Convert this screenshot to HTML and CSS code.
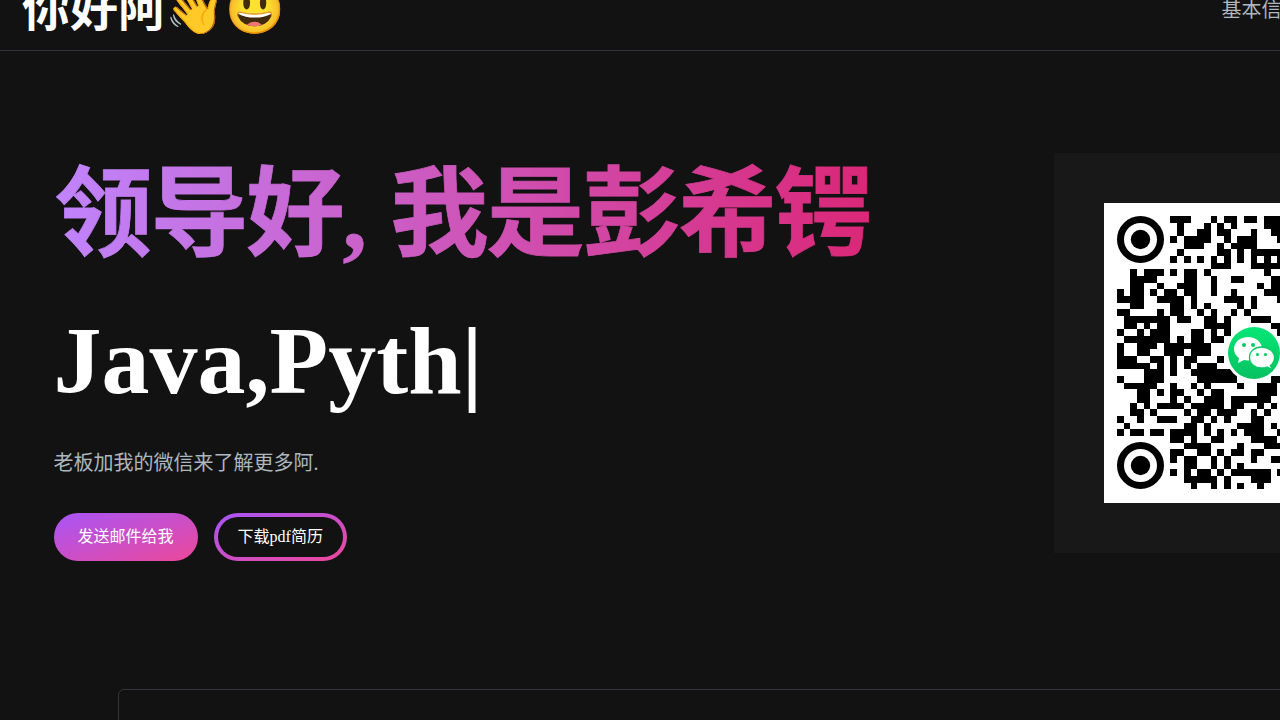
FILE: index.html
```
<!DOCTYPE html>
<html lang="zh">
<head>
<meta charset="utf-8">
<title>你好阿</title>
<link rel="stylesheet" href="styles.css">
</head>
<body>
<header class="navbar">
  <a class="brand">你好阿<span class="emoji">👋😃</span></a>
  <nav class="menu"><a>基本信息</a></nav>
</header>
<main class="hero">
  <section class="intro">
    <h1 class="title">领导好, 我是彭希锷</h1>
    <div class="typed">Java,Pyth<span>|</span></div>
    <p class="lead">老板加我的微信来了解更多阿.</p>
    <div class="actions">
      <a class="btn filled">发送邮件给我</a>
      <a class="btn outlined"><span>下载pdf简历</span></a>
    </div>
  </section>
  <aside class="card">
    <svg class="code" viewBox="0 0 300 300">
      <rect width="300" height="300" fill="#fff"/>
      <path id="modules" transform="translate(13 13) scale(6.683 6.667)" shape-rendering="crispEdges"/>
      <g fill="none" stroke="#000" stroke-width="7">
        <circle cx="36.500" cy="36.500" r="20"/><circle cx="36.500" cy="262.500" r="20"/>
      </g>
      <circle cx="36.500" cy="36.500" r="9.700"/><circle cx="36.500" cy="262.500" r="9.700"/>
      <defs><linearGradient id="green" x2="0" y2="1"><stop stop-color="#06e676"/><stop offset="1" stop-color="#07c160"/></linearGradient></defs>
      <circle cx="150" cy="150" r="29" fill="#fff"/>
      <circle cx="150" cy="150" r="26" fill="url(#green)"/>
      <path d="M144 134c-8 0-14 5-14 12 0 4 2 7 5 9l-1 5 6-3c9 2 18-3 18-11 0-7-6-12-14-12z" fill="#fff"/>
      <path d="M157.500 144c-7 0-12 4.500-12 10.500s5 10.500 12 10.500c2 0 4-.4 5.500-1l5 2.500-1.500-4c2.500-2 4-4.500 4-8 0-6-6-10.500-13-10.500z" fill="#fff" stroke="#07ca66" stroke-width="1.300"/>
      <g fill="#07c864"><circle cx="140" cy="142" r="2"/><circle cx="149" cy="142" r="2"/><circle cx="153.500" cy="151.500" r="1.600"/><circle cx="161.500" cy="151.500" r="1.600"/></g>
    </svg>
  </aside>
</main>
<section class="panel"></section>
<script src="code.js"></script>
</body>
</html>
```
FILE: styles.css
```
body{margin:0;height:720px;overflow:hidden;background:#121212;color:#fff;font-family:"Liberation Serif","Noto Sans CJK SC",serif}
.navbar{display:flex;justify-content:space-between;height:50px;border-bottom:1px solid #33333d;width:1400px}
.brand{font-size:48px;font-weight:700;line-height:70px;margin:-25px 0 0 22px;white-space:nowrap}
.emoji{margin-left:-.7px}
.menu{width:178.600px;font-size:20px;line-height:30px;margin-top:-5px;color:#adb7be;white-space:nowrap}
.hero{display:flex;justify-content:space-between;width:1400px;padding:102px 0 0 53.600px;box-sizing:border-box}
.intro{width:820px}
.title{width:818px;height:139px;margin:-8px 0 0;font-size:98px;font-weight:700;line-height:140px;letter-spacing:-2px;word-spacing:3px;text-indent:.8px;white-space:nowrap;color:transparent;-webkit-text-stroke:.8px transparent;background:linear-gradient(to right,#c084fc,#db2777);-webkit-background-clip:text;background-clip:text}
.typed{font-size:96px;line-height:96px;font-weight:800;margin-top:29px}
.lead{margin:40px 0 0;font-size:20px;line-height:28px;color:#adb7be}
.actions{display:flex;gap:16px;margin-top:36px}
.btn{display:block;height:48px;box-sizing:border-box;border-radius:24px;background:linear-gradient(to bottom right,#a855f7,#ec4899);font-size:16px;line-height:48px}
.filled{padding:0 24px;width:144px}
.outlined{padding:4px;width:133px}
.outlined span{display:block;height:40px;line-height:40px;border-radius:20px;background:#121212;padding-left:20px}
.card{width:400px;height:400px;padding:50px;box-sizing:border-box;background:#181818;flex:none;margin-right:-54px}
.code{display:block;width:300px;height:300px}
.panel{width:1200px;height:100px;margin:128px 0 0 118px;border:1px solid #33333d;border-radius:6px}
```
FILE: code.js
```
const spans = [
  "8-10 14 16-17 19-20 22-24",
  "9 13 15 17 22-24",
  "9 12-13 15-16 20 23-24",
  "8 10-13 16 18-20 24",
  "10-12 15 17-20",
  "9 15-16 18 20-24",
  "8 10 12 14 16 18 20 22 24",
  "14-16 20-24",
  "2 4-6 8 10-11 13 22",
  "2-5 10-11 14 17-18 23-24",
  "2-3 6 9-11 14 21 23-24",
  "0 2-3 5 7-8 10-11 14 17 22-24",
  "0-3 6-9 11 16-18 20 24",
  "2-3 8-9 11 13 18 20",
  "0-1 6 8-9 12 14 17 19",
  "1-7 9-10 13-14 16 20-22",
  "1-2 4 6-7 13-16 23-24",
  "0 3 5-7 11-12 14 16 24",
  "1-2 3-7 9 11-12 14-15",
  "0 3-5 7-13",
  "0 3-4 7-9 11-13",
  "0-2 5-6 8 10-11 15",
  "0-4 6 8 10 12-14",
  "4-6 8 11-17",
  "0 4-6 12-17 23-24",
  "1-5 8 11 13 18 21-23",
  "3-4 6 8-9 12 14-15 21-23",
  "3-4 8 10 13-15 17-22",
  "2 4 6-9 11-15 17-18 21 23",
  "2-3 5 10 12-13 15-17 20 22",
  "0 3 6-8 11-12 14 16 20-21",
  "1 10-11 13 18-21 23",
  "0 2-3 5-6 8-11 13 15 17 19-21 24",
  "8-9 11 14-15 20-23",
  "10-13 18 22-24",
  "8-9 12-13 15 17-18 20-21",
  "8 10-11 14 16 20 23-24",
  "10-11 14 16 18",
  "8 10 12-13 15 17-22 24",
  "10-13 14 16 20-22",
  "11 14 16 18 21"
];
let path = "";
spans.forEach((row, y) => row.split(" ").forEach(span => {
  const [first, last = first] = span.split("-").map(Number);
  path += `M${first} ${y}H${last + 1}V${y + 1}H${first}z`;
}));
document.getElementById("modules").setAttribute("d", path);
```
